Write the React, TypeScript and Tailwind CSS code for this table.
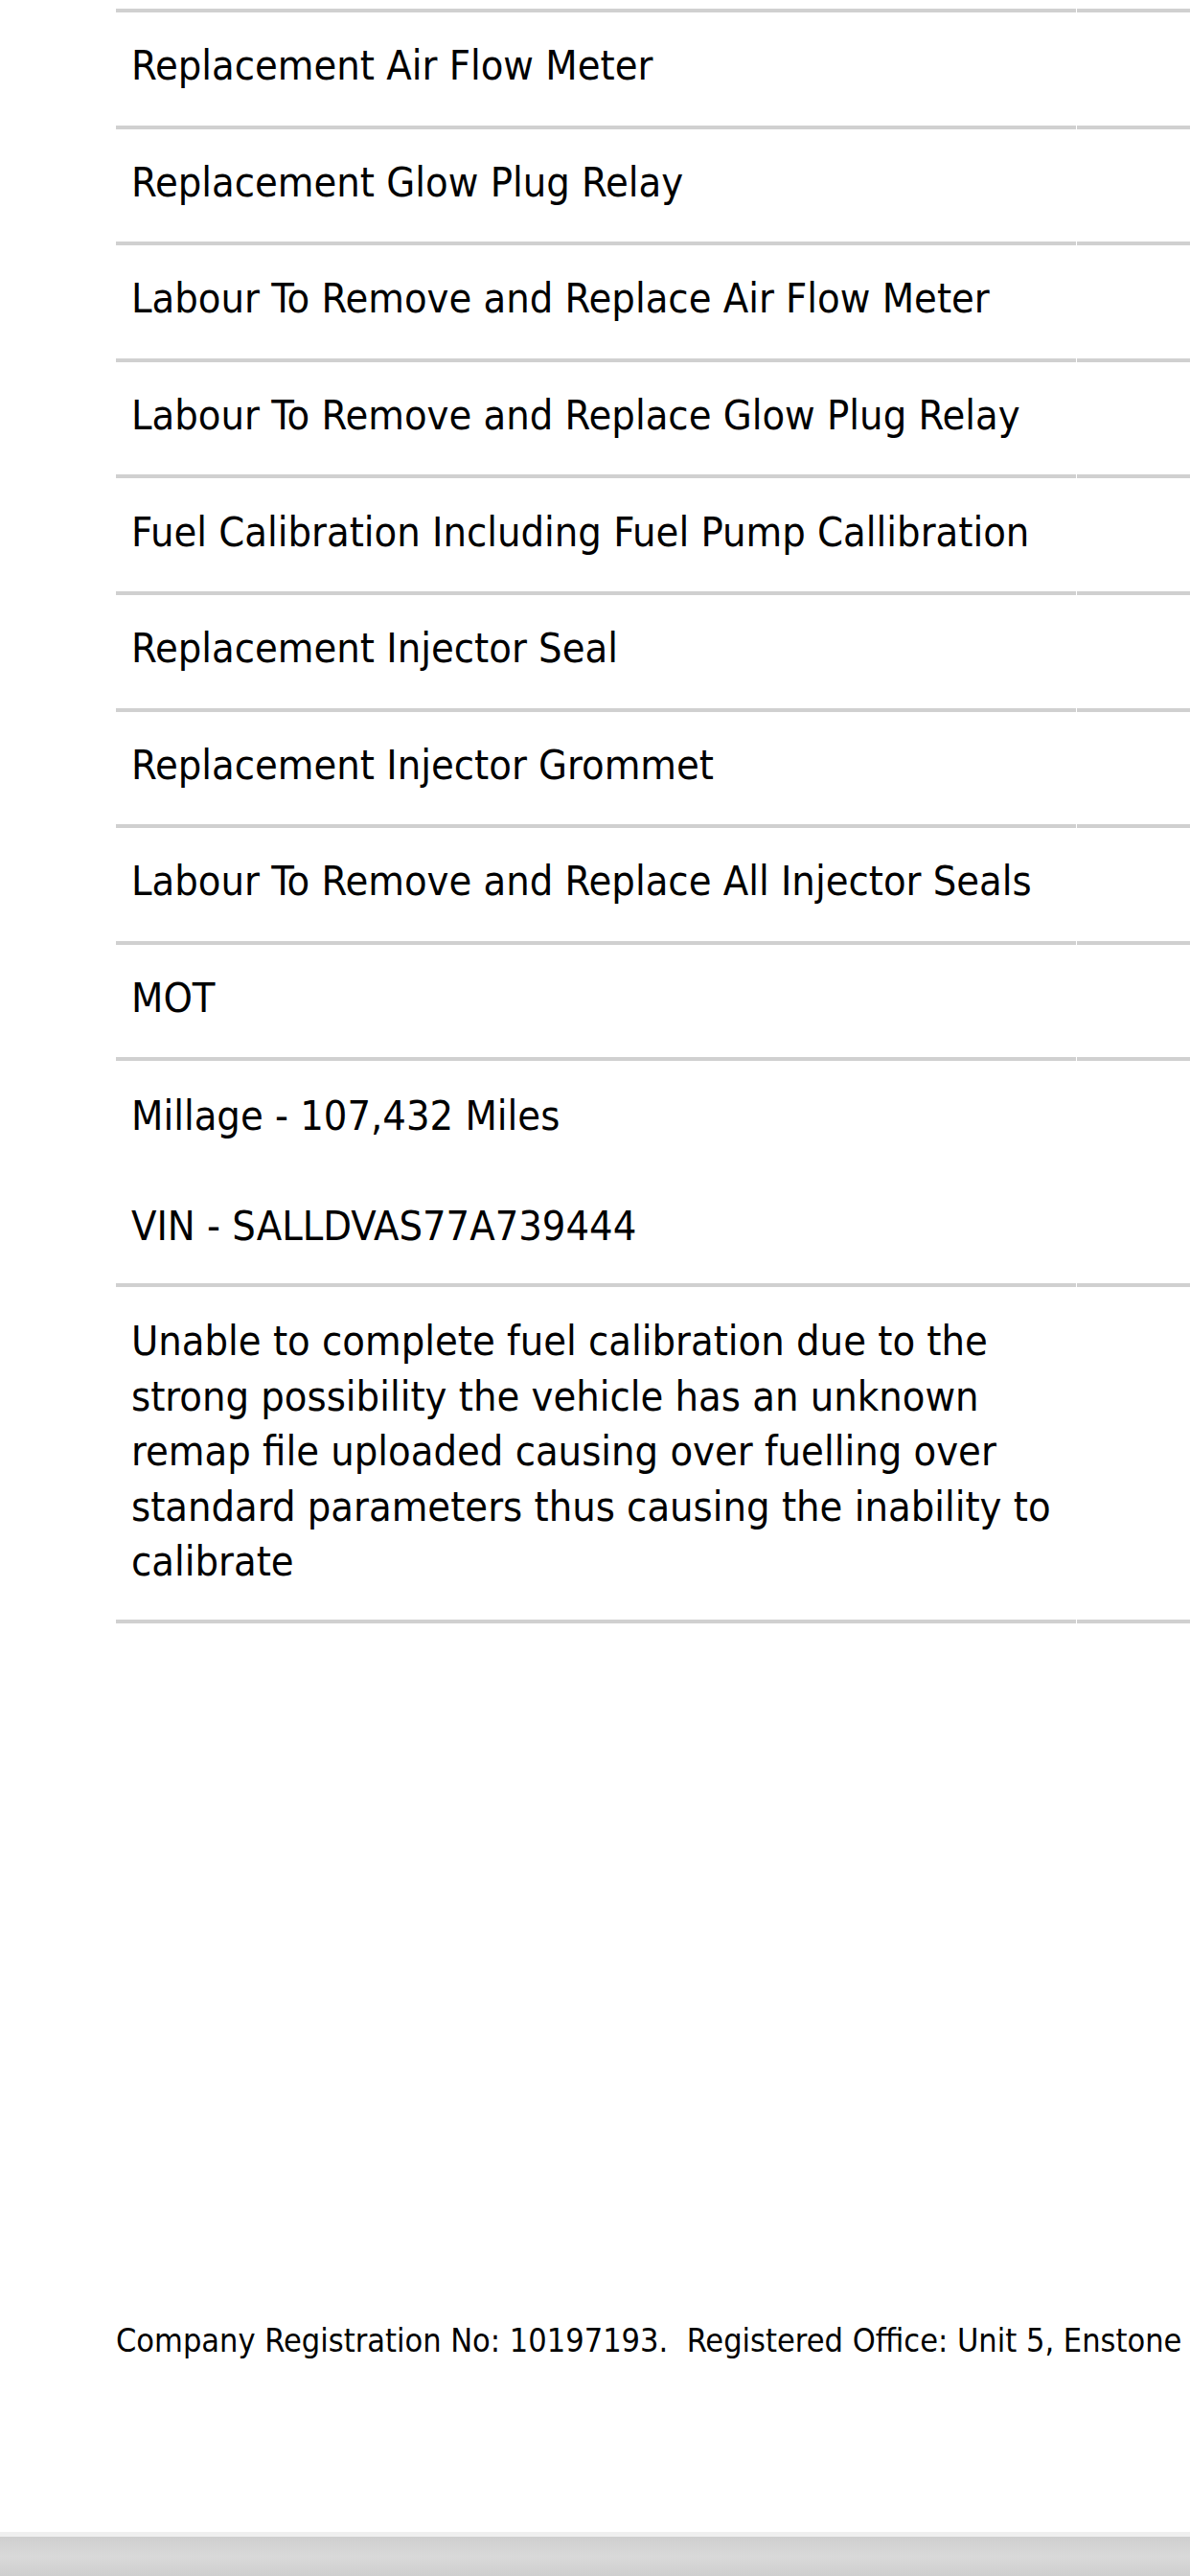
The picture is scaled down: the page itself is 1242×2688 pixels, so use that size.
import React from "react";

const items = [
  "Replacement Air Flow Meter",
  "Replacement Glow Plug Relay",
  "Labour To Remove and Replace Air Flow Meter",
  "Labour To Remove and Replace Glow Plug Relay",
  "Fuel Calibration Including Fuel Pump Callibration",
  "Replacement Injector Seal",
  "Replacement Injector Grommet",
  "Labour To Remove and Replace All Injector Seals",
  "MOT",
];

const font = { fontFamily: '"Liberation Sans Narrow", "DejaVu Sans Condensed", "Liberation Sans", sans-serif' };

const Row: React.FC<{ children: React.ReactNode; height: string; pad?: string }> = ({ children, height, pad = "" }) => (
  <div className="grid grid-cols-[1002px_1fr] gap-x-px">
    <div className={`${height} ${pad} border-b-4 border-[#d0d0d0] flex flex-col justify-center pl-4 pr-4`}>{children}</div>
    <div className="border-b-4 border-[#d0d0d0]"></div>
  </div>
);

const App: React.FC = () => {
  return (
    <div className="w-[1242px] h-[2688px] bg-white flex flex-col overflow-hidden text-black" style={font}>
      <div className="pt-[9px] pl-[121px]">
        <div className="grid grid-cols-[1002px_1fr] gap-x-px">
          <div className="border-b-4 border-[#d0d0d0]"></div>
          <div className="border-b-4 border-[#d0d0d0]"></div>
        </div>
        {items.map((item) => (
          <Row key={item} height="h-[121.6px]" pad="pb-[6px]">
            <p className="text-[43px] leading-[57px]">{item}</p>
          </Row>
        ))}
        <Row height="h-[236px]" pad="pb-[2px]">
          <p className="text-[43px] leading-[57px]">Millage - 107,432 Miles</p>
          <p className="text-[43px] leading-[57px] mt-[58px]">VIN - SALLDVAS77A739444</p>
        </Row>
        <Row height="h-[351px]">
          <p className="text-[43px] leading-[57.4px] pb-1">
            Unable to complete fuel calibration due to the strong possibility the vehicle has an unknown remap file
            uploaded causing over fuelling over standard parameters thus causing the inability to calibrate
          </p>
        </Row>
      </div>

      <div className="flex-1 flex items-end pb-[174px] pl-[121px]">
        <p className="text-[34px] whitespace-nowrap">
          Company Registration No: 10197193.&nbsp; Registered Office: Unit 5, Enstone
        </p>
      </div>

      <div className="h-[5px] bg-[#efefef]"></div>
      <div className="h-[41px] bg-gradient-to-b from-[#cfcfcf] via-[#d9d9d9] to-[#cfcfcf]"></div>
    </div>
  );
};

export default App;
